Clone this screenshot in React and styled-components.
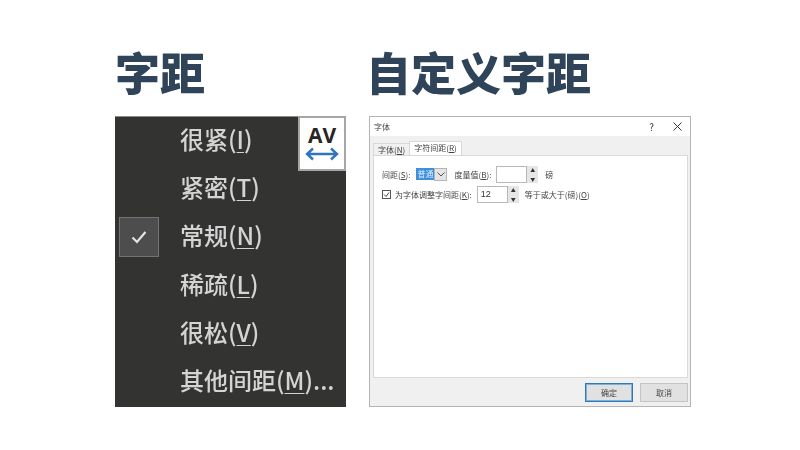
import styled, { createGlobalStyle } from "styled-components";

const cjk = `"Noto Sans CJK SC", "Noto Sans", sans-serif`;

const Global = createGlobalStyle`
  html, body { margin: 0; padding: 0; background: #fff; }
  body { width: 800px; height: 450px; overflow: hidden; font-family: ${cjk}; }
`;
const Page = styled.div`
  display: flex;
  gap: 23px;
  padding: 43px 0 0 115px;
`;
const Column = styled.section`
  display: flex;
  flex-direction: column;
  width: ${(p) => p.$w}px;
`;
const Title = styled.h1`
  margin: -1px 0 14px ${(p) => p.$shift || 0}px;
  height: 60px;
  line-height: 60px;
  font-size: 45px;
  font-weight: 900;
  color: #2f4459;
  white-space: nowrap;
  filter: blur(0.3px);
`;
const Menu = styled.div`
  position: relative;
  box-sizing: border-box;
  height: 291px;
  background: #333332;
  border-top: 1px solid #8c8c8c;
`;
const MenuRow = styled.div`
  box-sizing: border-box;
  display: flex;
  align-items: center;
  height: 48.2px;
  padding: 0 0 4px 65px;
  font-size: 24px;
  font-weight: 500;
  line-height: 1;
  color: #d4d4d4;
  white-space: nowrap;
  filter: blur(0.5px);
  u { text-underline-offset: 3px; text-decoration-thickness: 1px; }
`;
const CheckBox = styled.div`
  position: absolute;
  left: 4px;
  top: 100px;
  width: 40px;
  height: 40px;
  box-sizing: border-box;
  display: flex;
  align-items: center;
  justify-content: center;
  background: #4d4d4d;
  border: 1px solid #737373;
`;
const AvBadge = styled.div`
  position: absolute;
  right: 0;
  top: -1px;
  width: 48px;
  height: 55px;
  box-sizing: border-box;
  display: flex;
  flex-direction: column;
  align-items: center;
  padding-top: 5px;
  background: #fff;
  border: 2px solid #a6a6a6;
  font-family: "Open Sans", sans-serif;
  font-size: 21px;
  font-weight: 700;
  line-height: 24px;
  color: #262626;
`;
const Dialog = styled.div`
  box-sizing: border-box;
  height: 291px;
  display: flex;
  flex-direction: column;
  background: #f0f0f0;
  border: 1px solid #b4b4b4;
  color: #444;
  font-size: 8px;
  filter: blur(0.4px);
`;
const TitleBar = styled.div`
  display: flex;
  align-items: center;
  justify-content: space-between;
  height: 19px;
  padding: 0 8px 0 4px;
  background: #fff;
  flex: none;
`;
const WindowBtns = styled.div`
  display: flex;
  align-items: center;
  gap: 19px;
  font-size: 10px;
  color: #333;
`;
const Tabs = styled.div`
  display: flex;
  align-items: flex-end;
  height: 19px;
  padding-left: 3px;
  flex: none;
`;
const Tab = styled.div`
  box-sizing: border-box;
  height: ${(p) => (p.$active ? 14 : 12)}px;
  line-height: 12px;
  padding: 0 4px;
  background: ${(p) => (p.$active ? "#fff" : "#f0f0f0")};
  border: 1px solid #d9d9d9;
  border-bottom: none;
  margin-left: ${(p) => (p.$active ? -1 : 0)}px;
`;
const Sheet = styled.div`
  flex: 1;
  margin: 0 2px 0 3px;
  padding: 9px 0 0 8px;
  background: #fff;
  border: 1px solid #d9d9d9;
  display: flex;
  flex-direction: column;
  gap: 2px;
`;
const FormRow = styled.div`
  display: flex;
  align-items: center;
  height: 18px;
  white-space: nowrap;
`;
const Gap = styled.span`
  margin-left: ${(p) => p.$left}px;
`;
const Selected = styled.span`
  margin-left: 6px;
  padding: 0 1px;
  height: 12px;
  line-height: 12px;
  background: #3d8fdc;
  color: #dcecfa;
`;
const Arrow = styled.span`
  width: 13px;
  height: 13px;
  box-sizing: border-box;
  display: flex;
  align-items: center;
  justify-content: center;
  background: #e4e4e4;
  border: 1px solid #b5b5b5;
`;
const Field = styled.span`
  box-sizing: border-box;
  width: ${(p) => p.$w}px;
  height: 17px;
  line-height: 15px;
  margin-left: ${(p) => p.$left}px;
  padding-left: 3px;
  border: 1px solid #b8b8b8;
  font-family: "Liberation Sans", sans-serif;
  font-size: 9px;
  color: #333;
`;
const Spin = styled.span`
  width: 11px;
  height: 17px;
  display: flex;
  flex-direction: column;
  justify-content: space-between;
  align-items: center;
  background: #e6e6e6;
  font-size: 5px;
  line-height: 8px;
  color: #333;
`;
const Tick = styled.span`
  box-sizing: border-box;
  width: 9px;
  height: 9px;
  margin-right: 4px;
  display: flex;
  align-items: center;
  justify-content: center;
  border: 1px solid #555;
`;
const Footer = styled.div`
  box-sizing: border-box;
  display: flex;
  justify-content: flex-end;
  gap: 7px;
  height: 28px;
  padding: 5px 2px 0 0;
  flex: none;
`;
const Button = styled.div`
  box-sizing: border-box;
  width: 48px;
  height: 19px;
  line-height: 17px;
  text-align: center;
  background: #e1e1e1;
  border: 1px solid ${(p) => (p.$primary ? "#2f78b5" : "#c4c4c4")};
  box-shadow: ${(p) => (p.$primary ? "inset 0 0 0 1px #7fb0d8" : "none")};
`;

const items = [
  ["很紧(", "I", ")"],
  ["紧密(", "T", ")"],
  ["常规(", "N", ")"],
  ["稀疏(", "L", ")"],
  ["很松(", "V", ")"],
  ["其他间距(", "M", ")..."],
];

export default function App() {
  return (
    <>
      <Global />
      <Page>
        <Column $w={231}>
          <Title>字距</Title>
          <Menu>
            {items.map(([a, k, b]) => (
              <MenuRow key={k}>
                {a}
                <u>{k}</u>
                {b}
              </MenuRow>
            ))}
            <CheckBox>
              <svg width="18" height="18" viewBox="0 0 18 18" fill="none">
                <path d="M2.5 9.5l4.5 4.5 8.5-10" stroke="#e4e4e4" strokeWidth="2.2" />
              </svg>
            </CheckBox>
            <AvBadge>
              AV
              <svg width="34" height="14" viewBox="0 0 34 14" fill="none">
                <path
                  d="M2 7h30M8 1.5L2 7l6 5.5M26 1.5L32 7l-6 5.5"
                  stroke="#2f75bd"
                  strokeWidth="2.4"
                />
              </svg>
            </AvBadge>
          </Menu>
        </Column>
        <Column $w={322}>
          <Title $shift={-3}>自定义字距</Title>
          <Dialog>
            <TitleBar>
              <span>字体</span>
              <WindowBtns>
                <span>?</span>
                <svg width="9" height="9" viewBox="0 0 9 9" fill="none">
                  <path d="M.5.5l8 8M8.5.5l-8 8" stroke="#333" />
                </svg>
              </WindowBtns>
            </TitleBar>
            <Tabs>
              <Tab>
                字体(<u>N</u>)
              </Tab>
              <Tab $active>
                字符间距(<u>R</u>)
              </Tab>
            </Tabs>
            <Sheet>
              <FormRow>
                间距(<u>S</u>):
                <Selected>普通</Selected>
                <Arrow>
                  <svg width="8" height="5" viewBox="0 0 8 5" fill="none">
                    <path d="M.5.5L4 4 7.5.5" stroke="#555" />
                  </svg>
                </Arrow>
                <Gap $left={7}>
                  度量值(<u>B</u>):
                </Gap>
                <Field $w={31} $left={5} />
                <Spin>
                  <span>▲</span>
                  <span>▼</span>
                </Spin>
                <Gap $left={7}>磅</Gap>
              </FormRow>
              <FormRow>
                <Tick>
                  <svg width="7" height="7" viewBox="0 0 7 7" fill="none">
                    <path d="M1 3.5L3 5.5 6 1.5" stroke="#444" />
                  </svg>
                </Tick>
                为字体调整字间距(<u>K</u>):
                <Field $w={31} $left={5}>
                  12
                </Field>
                <Spin>
                  <span>▲</span>
                  <span>▼</span>
                </Spin>
                <Gap $left={6}>
                  等于或大于(磅)(<u>O</u>)
                </Gap>
              </FormRow>
            </Sheet>
            <Footer>
              <Button $primary>确定</Button>
              <Button>取消</Button>
            </Footer>
          </Dialog>
        </Column>
      </Page>
    </>
  );
}
